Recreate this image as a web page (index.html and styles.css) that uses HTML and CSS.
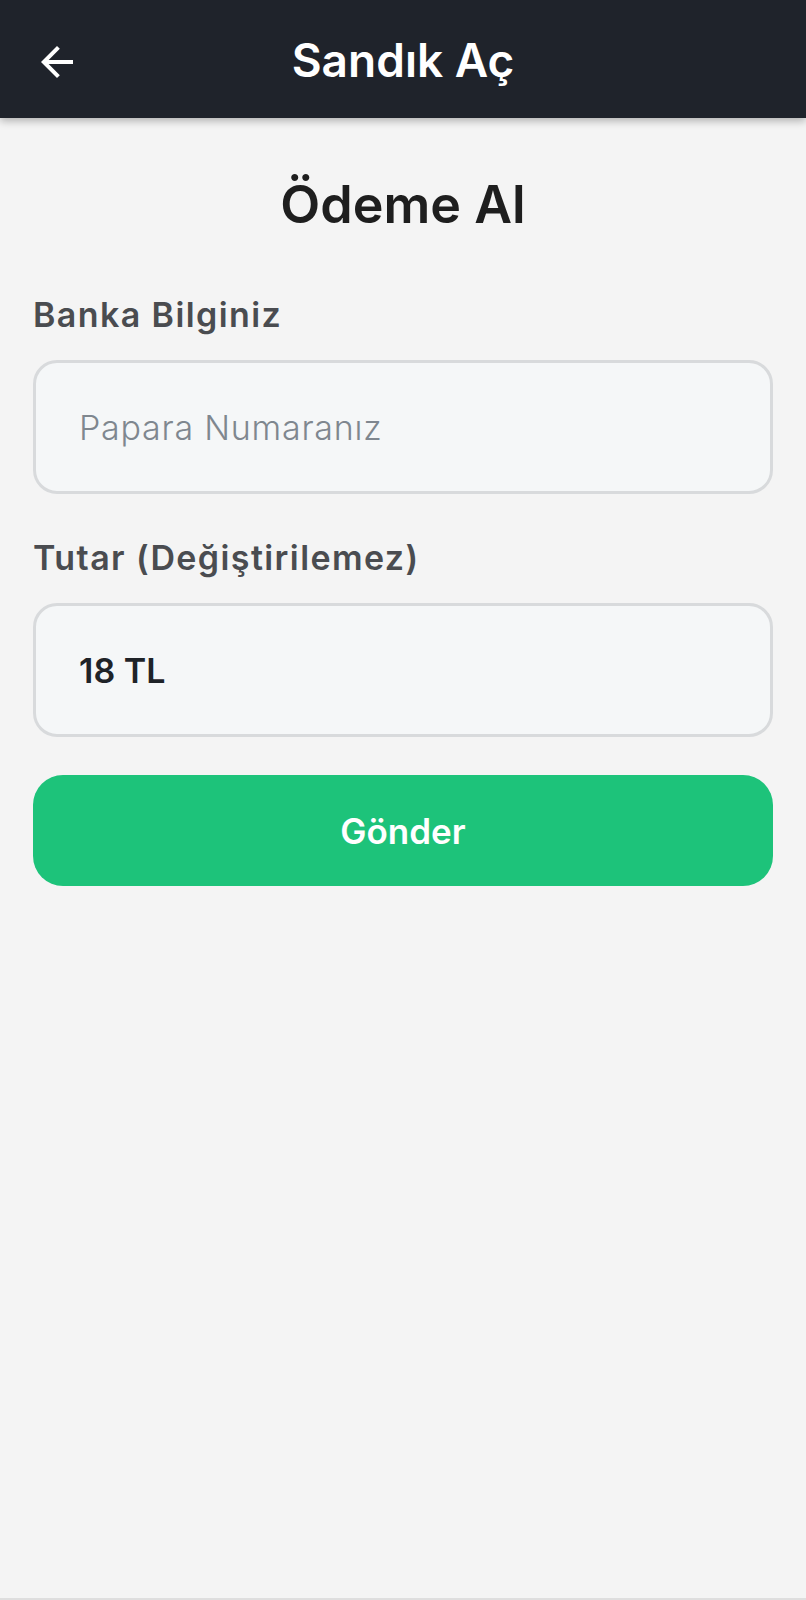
FILE: index.html
```html
<!DOCTYPE html>
<html lang="tr">
<head>
    <meta charset="UTF-8">
    <meta name="viewport" content="width=device-width, initial-scale=1.0">
    <title>Sandık Aç</title>
    <link rel="stylesheet" href="styles.css">
</head>
<body>
    <header class="app-bar">
        <button class="back-button" aria-label="Geri">
            <svg viewBox="0 0 24 24" width="48" height="48">
                <path d="M20 11H7.83l5.59-5.59L12 4l-8 8 8 8 1.41-1.41L7.83 13H20v-2z" fill="#ffffff"/>
            </svg>
        </button>
        <h1 class="app-title">Sandık Aç</h1>
    </header>

    <main class="page">
        <h2 class="page-title">Ödeme Al</h2>

        <form class="payment-form">
            <label class="field-label" for="bank-info">Banka Bilginiz</label>
            <input class="field-input" id="bank-info" type="text" placeholder="Papara Numaranız">

            <label class="field-label" for="amount">Tutar (Değiştirilemez)</label>
            <input class="field-input field-locked" id="amount" type="text" value="18 TL" readonly>

            <button class="submit-button" type="button">Gönder</button>
        </form>
    </main>
</body>
</html>
```

FILE: styles.css
```css
html, body {
    height: 100%;
}
body {
    margin: 0;
    font-family: 'Inter', 'Noto Sans', sans-serif;
    background-color: #f4f4f4;
    border-bottom: 2px solid #dedede;
    box-sizing: border-box;
}
.app-bar {
    position: relative;
    height: 118px;
    display: flex;
    align-items: center;
    justify-content: center;
    background-color: #1f232b;
    box-shadow: 0 3px 8px rgba(0, 0, 0, 0.28);
}
.back-button {
    position: absolute;
    left: 33px;
    top: 38px;
    padding: 0;
    border: none;
    background: none;
    display: flex;
    cursor: pointer;
}
.app-title {
    margin: 2px 0 0;
    color: #ffffff;
    font-size: 46px;
    font-weight: 600;
}
.page {
    padding: 56px 33px 0;
}
.page-title {
    margin: 0;
    text-align: center;
    font-size: 52px;
    line-height: 62px;
    font-weight: 600;
    color: #1e1e1e;
}
.payment-form {
    display: flex;
    flex-direction: column;
    margin-top: 58px;
}
.field-label {
    font-size: 34px;
    line-height: 41px;
    font-weight: 600;
    color: #4a4c50;
    letter-spacing: 1.4px;
}
.field-input {
    margin: 25px 0 43px;
    height: 134px;
    box-sizing: border-box;
    padding: 0 40px 0 43px;
    border: 3px solid #d8dadc;
    border-radius: 24px;
    background-color: #f5f7f8;
    font-family: inherit;
    font-size: 34px;
    color: #1f2328;
    outline: none;
}
.field-input::placeholder {
    color: #7f878f;
    font-weight: 300;
    letter-spacing: 0.75px;
}
.field-locked {
    font-weight: 600;
    margin-bottom: 38px;
}
.submit-button {
    height: 111px;
    border: none;
    border-radius: 30px;
    background-color: #1dc37a;
    color: #ffffff;
    font-family: inherit;
    font-size: 35px;
    font-weight: 600;
    cursor: pointer;
}
```
